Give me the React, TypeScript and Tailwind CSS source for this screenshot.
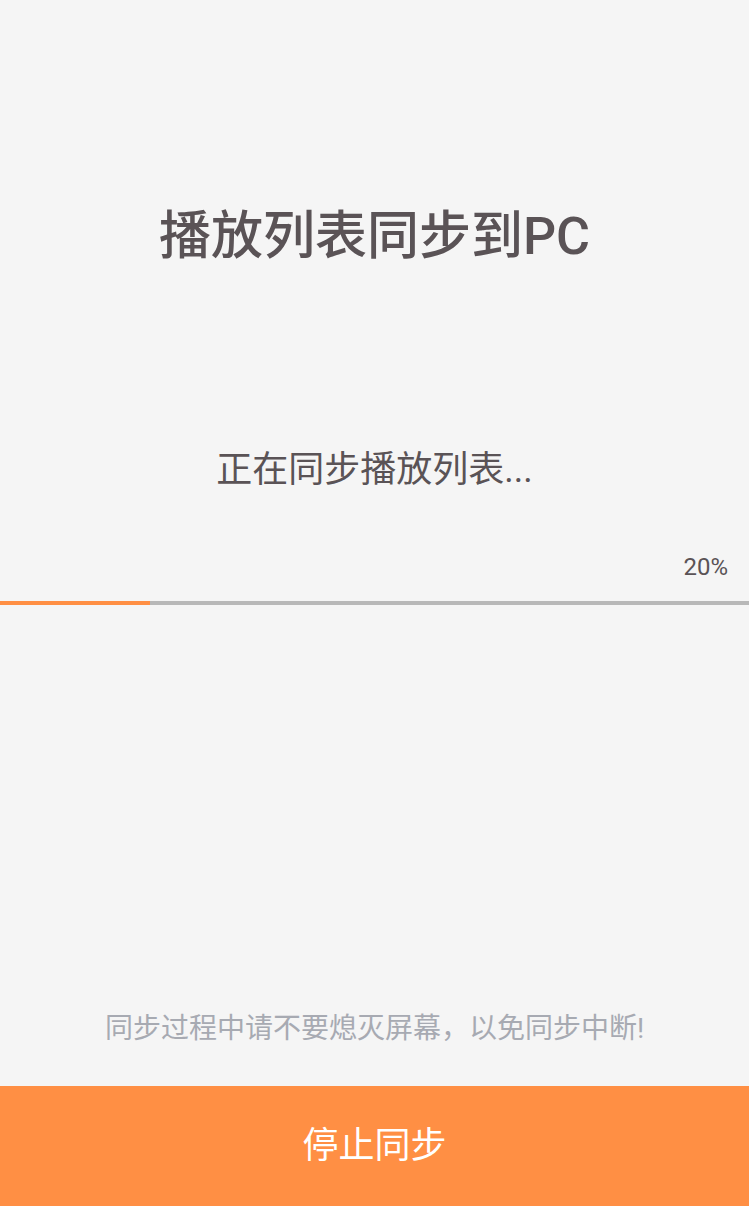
import React from 'react';

const progress = 20;

export default function App() {
  return (
    <div className="min-h-screen bg-[#f5f5f5] flex flex-col font-['Roboto','Noto_Sans_CJK_SC',sans-serif]">
      <h1 className="mt-[207px] text-center text-[52px] leading-[60px] font-medium text-[#5a5356]">
        播放列表同步到PC
      </h1>

      <p className="mt-[181px] text-center text-[36px] leading-[44px] text-[#5a5356]">
        正在同步播放列表...
      </p>

      <div className="mt-[61px] pr-[21px] text-right text-[24px] leading-[28px] text-[#5a5356]">
        {progress}%
      </div>

      {/* progress bar */}
      <div className="mt-[20px] h-[4px] w-full bg-[#b8b8b8]">
        <div className="h-full bg-[#ff8f44]" style={{ width: `${progress}%` }} />
      </div>

      <div className="flex-1" />

      <p className="mb-[39px] text-center text-[28px] leading-[36px] text-[#a7aab2]">
        同步过程中请不要熄灭屏幕，以免同步中断!
      </p>

      <button className="h-[120px] w-full bg-[#ff8f44] text-[36px] text-white">
        停止同步
      </button>
    </div>
  );
}
